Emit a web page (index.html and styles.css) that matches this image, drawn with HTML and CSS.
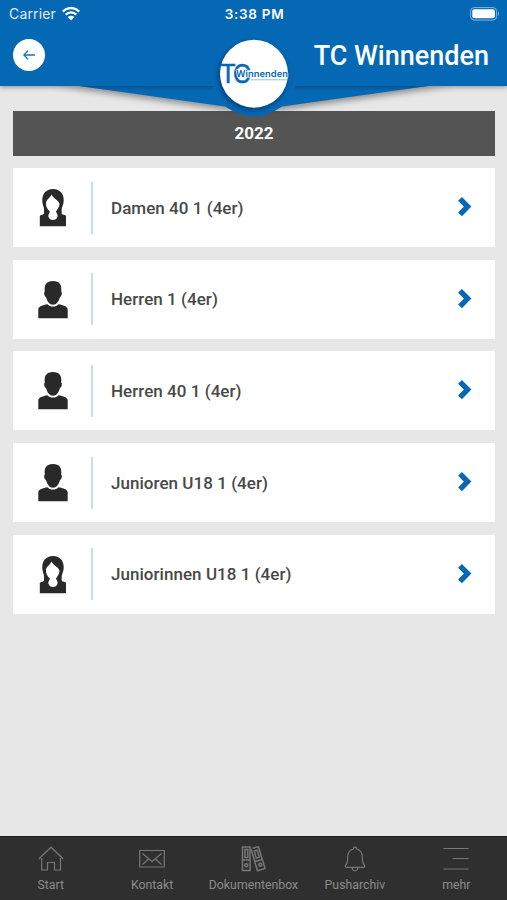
FILE: index.html
```html
<!DOCTYPE html>
<html lang="de">
<head>
<meta charset="utf-8">
<title>TC Winnenden</title>
<link rel="stylesheet" href="styles.css">
</head>
<body>
<svg class="defs" width="0" height="0" aria-hidden="true">
  <symbol id="woman" viewBox="0 0 28 38">
    <path fill-rule="evenodd" d="M14 0C7 0 3 5 3.300 11.500C3.300 16 5.300 18 5 21.500C5 24 5.500 25 4 25.500Q.8 26 .8 27V37.300H27V27Q27 26 23.500 25.500C22.300 25 22.800 24 22.700 21.500C22.500 18 24.700 16 24.700 11.500C25 5 21 0 14 0ZM12.500 5.500C14.500 10 20 11 20.500 15C20.500 18 18 21 17 22.500C18 25 19.500 26.500 18 29C16.500 31.500 11.500 31.500 10 29C8.500 26.500 10 25 10.800 22.500C8 20 6.500 17 7 13C8 10 11 9 12.500 5.500Z"/>
  </symbol>
  <symbol id="man" viewBox="0 0 30 38">
    <path d="M15 0C8.500 0 6 3.500 6.800 10.500C5.500 11.500 6.300 15.500 8 16C9.200 20.500 11.500 23.700 15 23.700S20.800 20.500 22 16C23.700 15.500 24.500 11.500 23.200 10.500C24 3.500 21.500 0 15 0ZM9.500 23.200C12 26.300 18 26.300 20.500 23.200C25 24.200 29.700 25 29.700 28.500V37.300H.3V28.500C.3 25 5 24.200 9.500 23.200Z"/>
  </symbol>
  <symbol id="chevron" viewBox="0 0 14 20">
    <path d="M2 1.900L9.600 9.600L2 17.300" fill="none" stroke="#0568b5" stroke-width="5.400"/>
  </symbol>
</svg>
<header class="header">
  <div class="status">
    <span class="carrier">Carrier
      <svg width="18" height="14" viewBox="0 0 18 14"><path d="M.8 4.600C5.500-.2 12.500-.2 17.200 4.600" /><path d="M3.700 7.600C6.800 4.600 11.200 4.600 14.300 7.600"/><path class="dot" d="M5.700 10Q9 7.400 12.300 10L9 13.500Z"/></svg>
    </span>
    <span class="time">3:38 PM</span>
    <svg class="battery" width="30" height="14" viewBox="0 0 30 14"><rect x=".6" y=".6" width="26" height="12.500" rx="3.600" fill="none" stroke="#82b5dc"/><rect x="2.300" y="2.300" width="22.600" height="9" rx="2" fill="#fff"/><path d="M28 4.600Q30 6.800 28 9Z" fill="#82b5dc"/></svg>
  </div>
  <div class="titlebar">
    <span class="back"><svg width="12" height="10" viewBox="0 0 12 10"><path d="M5 .7L.8 5L5 9.300M1 5H12" fill="none" stroke="#1b73b9" stroke-width="1.300"/></svg></span>
    <h1>TC Winnenden</h1>
  </div>
  <svg class="flap" width="507" height="50" viewBox="0 0 507 50">
    <defs>
      <linearGradient id="fade" x1="0" x2="0" y1="0" y2="1"><stop offset="0" stop-color="#064d87" stop-opacity=".75"/><stop offset="1" stop-color="#064d87" stop-opacity="0"/></linearGradient>
      <filter id="soft" x="-10%" y="-30%" width="120%" height="180%"><feGaussianBlur stdDeviation="3"/></filter>
      <filter id="edge" x="-30%" y="-30%" width="160%" height="160%"><feGaussianBlur stdDeviation="2"/></filter>
    </defs>
    <path d="M55 0H452L280 24H227Z" fill="#444" opacity=".55" filter="url(#soft)"/>
    <path d="M79 0H428L282 20.500Q254 40 225 20.500Z" fill="#0568b5"/>
    <path d="M79 0H213V5H115ZM295 0H428L393 5H295Z" fill="url(#fade)"/>
  </svg>
  <svg class="logo" width="84" height="86" viewBox="0 0 84 86">
    <circle cx="42" cy="43" r="41.500" fill="#0568b5"/>
    <circle cx="41" cy="44" r="35" fill="#003b70" opacity=".7" filter="url(#edge)"/>
    <circle cx="42" cy="41.700" r="34" fill="#fff"/>
    <text x="8" y="50.500" class="tc" textLength="31">TC</text>
    <text x="24" y="44.500" class="club" textLength="52" lengthAdjust="spacingAndGlyphs">Winnenden</text>
    <path d="M39 47.800H75" stroke="#0568b5" stroke-width=".6" opacity=".7"/>
  </svg>
</header>
<main>
  <h2>2022</h2>
  <ul class="teams">
    <li><svg class="person"><use href="#woman"/></svg><span class="name">Damen 40 1 (4er)</span><svg class="chevron"><use href="#chevron"/></svg></li>
    <li><svg class="person"><use href="#man"/></svg><span class="name">Herren 1 (4er)</span><svg class="chevron"><use href="#chevron"/></svg></li>
    <li><svg class="person"><use href="#man"/></svg><span class="name">Herren 40 1 (4er)</span><svg class="chevron"><use href="#chevron"/></svg></li>
    <li><svg class="person"><use href="#man"/></svg><span class="name">Junioren U18 1 (4er)</span><svg class="chevron"><use href="#chevron"/></svg></li>
    <li><svg class="person"><use href="#woman"/></svg><span class="name">Juniorinnen U18 1 (4er)</span><svg class="chevron"><use href="#chevron"/></svg></li>
  </ul>
</main>
<nav>
  <a><svg viewBox="0 0 26 26"><path d="M.7 13L13 1.200L25.300 13M3.700 12V24H9.500V16.500H16.500V24H22.500V12"/></svg>Start</a>
  <a><svg viewBox="0 0 26 26"><path d="M.7 4.500H25.300V21H.7ZM3.500 7.500L13 15.500L22.500 7.500M3.500 18.500L9.500 13M22.500 18.500L16.500 13"/></svg>Kontakt</a>
  <a><svg class="binders" viewBox="0 0 26 26"><path d="M2.500 1H10V24.500H2.500ZM2.500 14H10M5 3.500H7.800V11.500H5ZM12.500 2.200L18.500 .8L25 22.500L17.500 24.700L11 3M15 15.500L22.500 13.500M14.200 5L17.200 4.200L19.300 11.300L16.300 12.100Z"/><circle cx="6.300" cy="19.300" r="1.500"/><circle cx="20.200" cy="18.800" r="1.500"/></svg>Dokumentenbox</a>
  <a><svg viewBox="0 0 26 26"><path d="M11.500 3Q11.500 .8 13 .8T14.500 3C18.500 4 20.300 7 20.300 11C20.300 16 21 18 22.500 19.500Q23 21.300 21.500 21.300H4.500Q3 21.300 3.500 19.500C5 18 5.700 16 5.700 11C5.700 7 7.500 4 11.500 3ZM10 21.500Q10.500 24.800 13 24.800T16 21.500"/></svg>Pusharchiv</a>
  <a><svg viewBox="0 0 26 26"><path d="M.5 2.500H25.500M9.500 12.500H25.500M.5 23H25.500"/></svg>mehr</a>
</nav>
</body>
</html>
```
FILE: styles.css
```css
* { box-sizing: border-box; }
body {
  margin: 0;
  width: 507px;
  height: 900px;
  display: flex;
  flex-direction: column;
  overflow: hidden;
  background: #e7e7e7;
  font-family: Roboto, sans-serif;
}
svg { flex: none; display: block; }
.defs { position: absolute; }
.header {
  position: relative;
  z-index: 1;
  flex: none;
  height: 86px;
  background: #0568b5;
  color: #fff;
  box-shadow: 0 1px 5px #0006;
}
.status {
  height: 27px;
  display: grid;
  grid-template-columns: 1fr auto 1fr;
  align-items: center;
  padding: 0 7px 0 9px;
  font: 14px Inter, sans-serif;
}
.carrier { display: flex; align-items: center; gap: 6px; color: #e1edf6; letter-spacing: .15px; }
.carrier path { fill: none; stroke: #fff; stroke-width: 2.300; }
.carrier .dot { fill: #fff; stroke: none; }
.time { font-weight: 600; font-size: 13.500px; letter-spacing: .7px; }
.battery { justify-self: end; }
.titlebar {
  height: 56px;
  display: flex;
  align-items: center;
  justify-content: space-between;
  padding: 0 18px 0 13px;
}
.back {
  width: 32px;
  height: 32px;
  border-radius: 50%;
  background: #fff;
  display: grid;
  place-items: center;
}
h1 { margin: 0; padding-top: 2px; font-size: 27px; font-weight: 500; line-height: 32px; }
.flap { position: absolute; left: 0; top: 86px; }
.logo { position: absolute; left: 212px; top: 32px; }
.tc { font: 25px Inter, sans-serif; fill: #0568b5; stroke: #0568b5; stroke-width: .5; }
.club { font: 600 9px Inter, sans-serif; fill: #0568b5; stroke: #fff; stroke-width: 1.200; paint-order: stroke; }
main { flex: 1; padding: 25px 12px 0 13px; }
h2 {
  margin: 0 0 12.400px;
  height: 45px;
  background: #545454;
  color: #fff;
  font-size: 17px;
  font-weight: 700;
  line-height: 45px;
  text-align: center;
}
.teams {
  list-style: none;
  margin: 0;
  padding: 0;
  display: flex;
  flex-direction: column;
  gap: 12.550px;
}
.teams li {
  height: 79px;
  background: #fff;
  display: flex;
  align-items: center;
  padding: 0 23px 0 25px;
}
.person { width: 30px; height: 38px; margin-top: 1px; fill: #292929; }
.name {
  flex: 1;
  height: 52px;
  margin-left: 23px;
  padding-left: 18px;
  border-left: 2px solid #c5deef;
  font-size: 17px;
  font-weight: 500;
  line-height: 52px;
  letter-spacing: .04px;
  color: #484848;
}
.chevron { width: 14px; height: 20px; margin-bottom: 1px; }
nav {
  height: 64px;
  flex: none;
  display: grid;
  grid-template-columns: repeat(5, 1fr);
  background: #2f2f2f;
  border-top: 1px solid #222;
}
nav a {
  display: flex;
  flex-direction: column;
  align-items: center;
  padding-top: 9px;
  font-size: 12.300px;
  line-height: 15px;
  color: #8c8c8c;
  gap: 6px;
}
nav svg { width: 26px; height: 26px; fill: none; stroke: #777; stroke-width: 1.200; }
nav .binders { stroke-width: 1.500; }
```
